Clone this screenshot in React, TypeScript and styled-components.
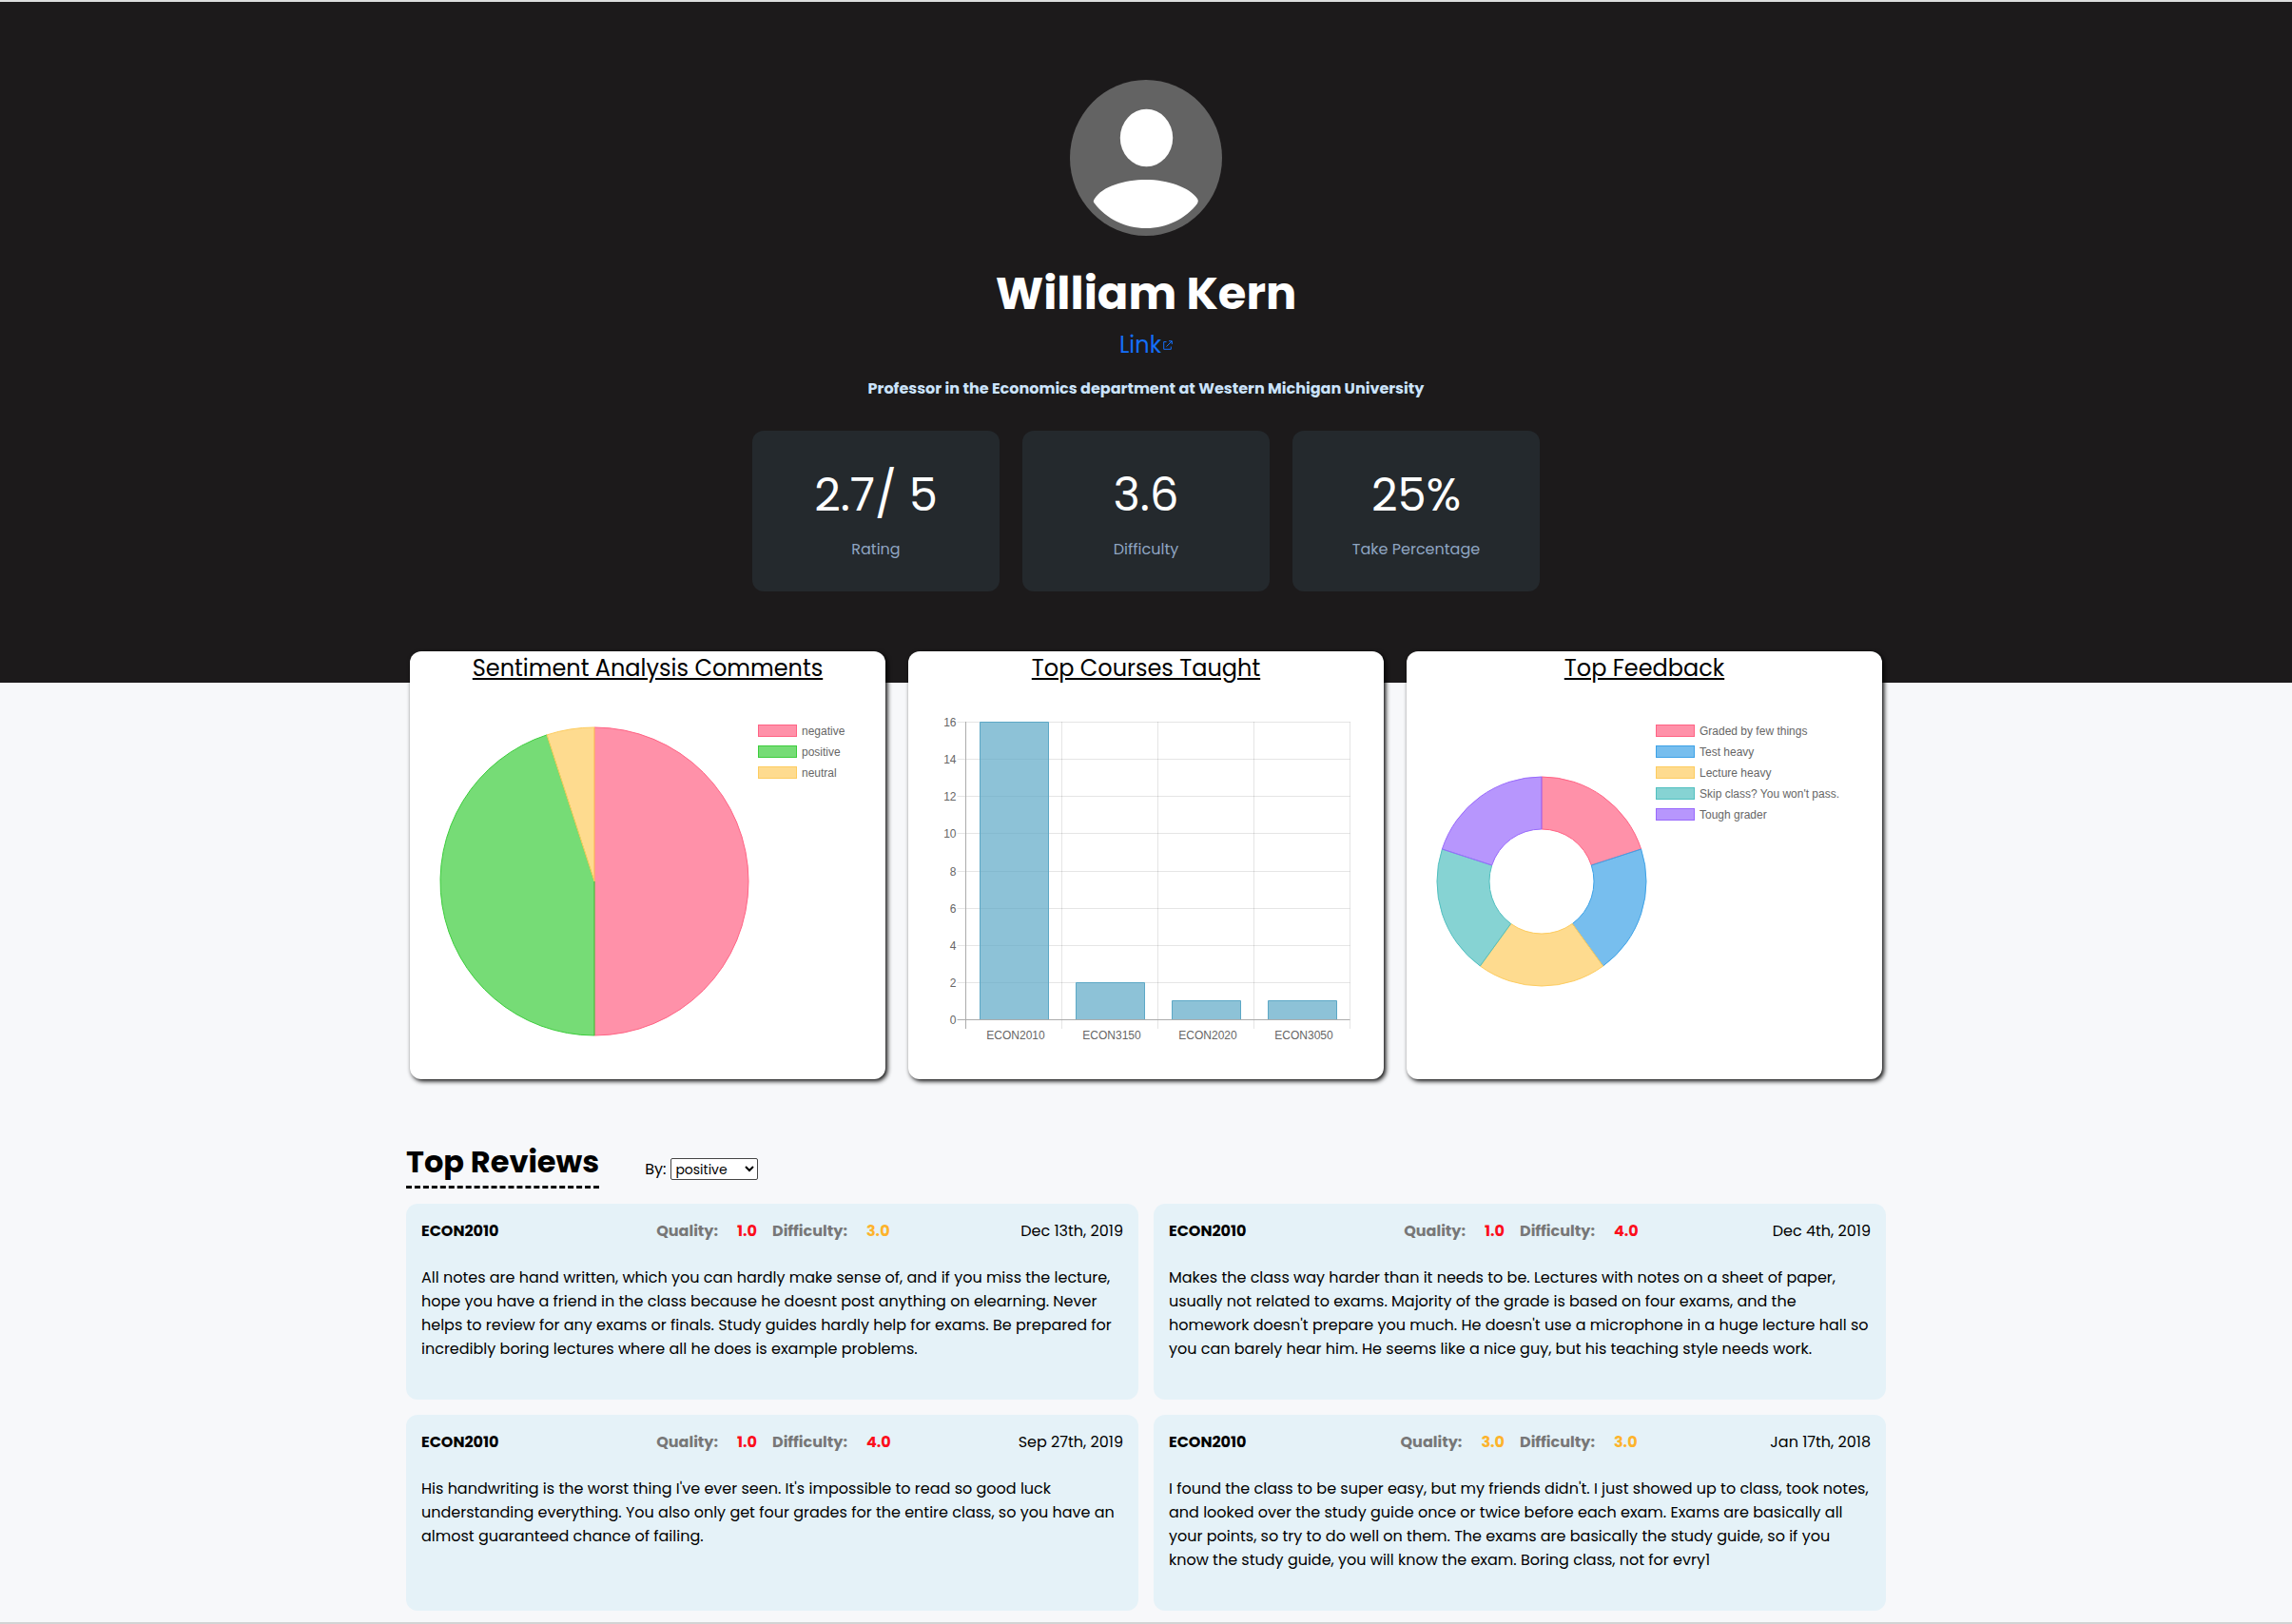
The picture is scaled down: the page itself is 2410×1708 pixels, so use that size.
import React from 'react';
import styled, { createGlobalStyle } from 'styled-components';

const Global = createGlobalStyle`
  *, *::before, *::after { box-sizing: border-box; }
  body {
    margin: 0;
    background: #f7f8fa;
    color: #000;
    font-family: Poppins, Inter, "Open Sans", sans-serif;
    font-size: 16px;
    line-height: 25px;
  }
  h1, h2, h3, p, ul, dl, dd { margin: 0; padding: 0; }
`;

const Page = styled.div`
  border-top: 2px solid #dcdede;
  border-bottom: 2px solid #d2d3d4;
`;

const Hero = styled.header`
  display: flex;
  flex-direction: column;
  align-items: center;
  height: 716px;
  padding: 82px 24px 0;
  background: #1c1a1b;
  color: #fff;
`;

const Name = styled.h1`
  margin-top: 24px;
  font-size: 48px;
  line-height: 73px;
  font-weight: 700;
`;

const ProfileLink = styled.a`
  display: flex;
  align-items: center;
  gap: 2px;
  font-size: 24px;
  line-height: 36px;
  color: #146ffb;
  text-decoration: none;
`;

const Summary = styled.p`
  margin-top: 16px;
  font-weight: 700;
  line-height: 24px;
  color: #cbe3fb;
`;

const Stats = styled.dl`
  display: flex;
  gap: 24px;
  margin-top: 32px;
`;

const StatCard = styled.div`
  display: flex;
  flex-direction: column-reverse;
  justify-content: center;
  gap: 8px;
  width: 260px;
  height: 169px;
  border-radius: 12px;
  background: #24292d;
  text-align: center;
`;

const StatLabel = styled.dt`
  color: #8fa5c2;
`;

const StatValue = styled.dd`
  font-size: 48px;
  line-height: 72px;
`;

const Content = styled.main`
  width: min(1556px, 100% - 48px);
  margin: -33px auto 0;
  padding-bottom: 12px;
`;

const Cards = styled.section`
  display: grid;
  grid-template-columns: repeat(3, 1fr);
  gap: 24px;
  padding: 0 4px;
`;

const Card = styled.article`
  height: 450px;
  border-radius: 12px;
  background: #fff;
  box-shadow: 2px 2px 5px #000;
`;

const CardTitle = styled.h2`
  font-size: 24px;
  line-height: 36px;
  font-weight: 400;
  text-align: center;
  text-decoration: underline;
`;

const ChartRow = styled.div`
  display: flex;
  align-items: center;
  height: 364px;
  margin-top: 24px;
  padding: 0 32px;
  font-family: "Liberation Sans", Arial, sans-serif;
  font-size: 12px;
  line-height: 12px;
  color: #666;
`;

const Drawing = styled.svg<{ $width: number }>`
  flex: 0 1 ${(p) => p.$width}px;
  min-width: 0;
  overflow: visible;
`;

const Legend = styled.ul`
  display: flex;
  flex-direction: column;
  flex-shrink: 0;
  align-self: flex-start;
  gap: 9px;
  padding: 17px 0 0 10px;
  list-style: none;
`;

const LegendItem = styled.li`
  display: flex;
  align-items: center;
  gap: 5px;
  height: 13px;
  white-space: nowrap;
`;

const Swatch = styled.span<{ $rgb: string }>`
  width: 41px;
  height: 13px;
  border: 1px solid rgb(${(p) => p.$rgb});
  background: rgba(${(p) => p.$rgb}, 0.7);
`;

const ReviewsHead = styled.div`
  display: flex;
  align-items: flex-end;
  gap: 48px;
  margin-top: 64px;
`;

const ReviewsTitle = styled.h2`
  padding-bottom: 3px;
  border-bottom: 3px dashed #000;
  font-size: 32px;
  line-height: 45px;
  font-weight: 700;
`;

const Filter = styled.label`
  display: flex;
  align-items: center;
  gap: 5px;
  padding-bottom: 8px;
`;

const Select = styled.select`
  width: 92px;
  height: 23px;
  padding: 0;
  border: 1px solid #444;
  border-radius: 2px;
  background: #fff;
  color: #000;
  font-family: inherit;
  font-size: 14px;
`;

const Reviews = styled.section`
  display: grid;
  grid-template-columns: 1fr 1fr;
  gap: 16px;
  margin-top: 16px;
`;

const Review = styled.article`
  min-height: 206px;
  padding: 17px 16px;
  border-radius: 12px;
  background: #e5f2f8;
`;

const ReviewHead = styled.header`
  display: grid;
  grid-template-columns: 1fr 1fr;
  line-height: 24px;
`;

const HeadHalf = styled.div`
  display: flex;
  justify-content: space-between;
`;

const Course = styled.h3`
  font-size: 16px;
  line-height: 24px;
  font-weight: 700;
`;

const Score = styled.span`
  display: flex;
  gap: 20px;
  margin-right: 16px;
  font-weight: 700;
  color: #777;
`;

const ScoreValue = styled.span<{ $color: string }>`
  color: ${(p) => p.$color};
`;

const Comment = styled.p`
  margin-top: 24px;
`;

const RED = '#fc0d1b';
const ORANGE = '#fdb32b';

type Slice = { label: string; value: number; rgb: string };

const sentiment: Slice[] = [
  { label: 'negative', value: 10, rgb: '255, 99, 132' },
  { label: 'positive', value: 9, rgb: '60, 205, 60' },
  { label: 'neutral', value: 1, rgb: '253, 204, 95' },
];

const feedback: Slice[] = [
  { label: 'Graded by few things', value: 1, rgb: '255, 99, 132' },
  { label: 'Test heavy', value: 1, rgb: '61, 162, 231' },
  { label: 'Lecture heavy', value: 1, rgb: '253, 204, 95' },
  { label: "Skip class? You won't pass.", value: 1, rgb: '82, 192, 192' },
  { label: 'Tough grader', value: 1, rgb: '153, 106, 252' },
];

const courses = [
  { label: 'ECON2010', value: 16 },
  { label: 'ECON3150', value: 2 },
  { label: 'ECON2020', value: 1 },
  { label: 'ECON3050', value: 1 },
];

const reviews = [
  {
    course: 'ECON2010',
    quality: '1.0',
    qualityColor: RED,
    difficulty: '3.0',
    difficultyColor: ORANGE,
    date: 'Dec 13th, 2019',
    text: 'All notes are hand written, which you can hardly make sense of, and if you miss the lecture, hope you have a friend in the class because he doesnt post anything on elearning. Never helps to review for any exams or finals. Study guides hardly help for exams. Be prepared for incredibly boring lectures where all he does is example problems.',
  },
  {
    course: 'ECON2010',
    quality: '1.0',
    qualityColor: RED,
    difficulty: '4.0',
    difficultyColor: RED,
    date: 'Dec 4th, 2019',
    text: "Makes the class way harder than it needs to be. Lectures with notes on a sheet of paper, usually not related to exams. Majority of the grade is based on four exams, and the homework doesn't prepare you much. He doesn't use a microphone in a huge lecture hall so you can barely hear him. He seems like a nice guy, but his teaching style needs work.",
  },
  {
    course: 'ECON2010',
    quality: '1.0',
    qualityColor: RED,
    difficulty: '4.0',
    difficultyColor: RED,
    date: 'Sep 27th, 2019',
    text: "His handwriting is the worst thing I've ever seen. It's impossible to read so good luck understanding everything. You also only get four grades for the entire class, so you have an almost guaranteed chance of failing.",
  },
  {
    course: 'ECON2010',
    quality: '3.0',
    qualityColor: ORANGE,
    difficulty: '3.0',
    difficultyColor: ORANGE,
    date: 'Jan 17th, 2018',
    text: "I found the class to be super easy, but my friends didn't. I just showed up to class, took notes, and looked over the study guide once or twice before each exam. Exams are basically all your points, so try to do well on them. The exams are basically the study guide, so if you know the study guide, you will know the exam. Boring class, not for evry1",
  },
];

function Avatar() {
  return (
    <svg width="160" height="164" viewBox="0 0 160 164" role="img" aria-label="Profile picture">
      <ellipse cx="80" cy="82" rx="80" ry="82" fill="#636363" />
      <ellipse cx="80.500" cy="61" rx="27.700" ry="30.200" fill="#fff" />
      <path
        d="M26 125C34 112 57 105 80 105s46 8 54 20c1 1.500 1 3 0 5-12 16-32 26-54 26s-42-10-54-26c-2-2-1-3.500 0-5Z"
        fill="#fff"
      />
    </svg>
  );
}

function ExternalIcon() {
  return (
    <svg width="10" height="10" viewBox="0 0 10 10" fill="none" stroke="currentColor" aria-hidden="true">
      <path d="M3.500 1.500H.7v7.800h7.600V6.500M6 .7h3.300V4M9 1 3.500 6.500" />
    </svg>
  );
}

function SliceChart({ data, radius, hole }: { data: Slice[]; radius: number; hole: number }) {
  const total = data.reduce((sum, s) => sum + s.value, 0);
  const point = (r: number, turn: number) => {
    const a = turn * Math.PI * 2;
    return `${(r * Math.sin(a)).toFixed(2)} ${(-r * Math.cos(a)).toFixed(2)}`;
  };
  let start = 0;
  return (
    <Drawing $width={radius * 2} viewBox={`${-radius} ${-radius} ${radius * 2} ${radius * 2}`}>
      {data.map((s) => {
        const from = start;
        const to = start + s.value / total;
        start = to;
        const large = to - from > 0.5 ? 1 : 0;
        const d =
          `M${point(radius, from)}A${radius} ${radius} 0 ${large} 1 ${point(radius, to)}` +
          `L${point(hole, to)}` +
          (hole ? `A${hole} ${hole} 0 ${large} 0 ${point(hole, from)}` : '') +
          'Z';
        return <path key={s.label} d={d} fill={`rgba(${s.rgb}, 0.7)`} stroke={`rgb(${s.rgb})`} />;
      })}
    </Drawing>
  );
}

function SliceLegend({ data }: { data: Slice[] }) {
  return (
    <Legend>
      {data.map((s) => (
        <LegendItem key={s.label}>
          <Swatch $rgb={s.rgb} />
          {s.label}
        </LegendItem>
      ))}
    </Legend>
  );
}

function BarChart() {
  const left = 28.5;
  const step = 101;
  const zero = 327.5;
  const y = (v: number) => Math.floor(zero - (v * 313) / 16) + 0.5;
  const right = left + step * courses.length;
  return (
    <Drawing $width={436} viewBox="0 0 436 364">
      <g stroke="#000" strokeOpacity="0.1">
        {[2, 4, 6, 8, 10, 12, 14, 16].map((v) => (
          <path key={v} d={`M${left - 9} ${y(v)}H${right}`} />
        ))}
        {[1, 2, 3, 4].map((i) => (
          <path key={i} d={`M${left + step * i} 14V337`} />
        ))}
      </g>
      <g fill="rgba(93, 168, 198, 0.7)" stroke="rgb(93, 168, 198)">
        {courses.map((c, i) => {
          const x = left + step * i + 15;
          return <path key={c.label} d={`M${x} ${zero - 0.5}V${y(c.value)}h72V${zero - 0.5}`} />;
        })}
      </g>
      <path d={`M${left} 14V337M${left - 9} ${zero}H${right}`} stroke="#acacac" />
      <g fill="#666" textAnchor="end">
        {[0, 2, 4, 6, 8, 10, 12, 14, 16].map((v) => (
          <text key={v} x={left - 10} y={y(v) + 4}>
            {v}
          </text>
        ))}
      </g>
      <g fill="#666" textAnchor="middle">
        {courses.map((c, i) => (
          <text key={c.label} x={left + step * (i + 0.5) + 2} y="348">
            {c.label}
          </text>
        ))}
      </g>
    </Drawing>
  );
}

export default function App() {
  return (
    <Page>
      <Global />
      <Hero>
        <Avatar />
        <Name>William Kern</Name>
        <ProfileLink href="#">
          Link
          <ExternalIcon />
        </ProfileLink>
        <Summary>Professor in the Economics department at Western Michigan University</Summary>
        <Stats>
          <StatCard>
            <StatLabel>Rating</StatLabel>
            <StatValue>2.7/ 5</StatValue>
          </StatCard>
          <StatCard>
            <StatLabel>Difficulty</StatLabel>
            <StatValue>3.6</StatValue>
          </StatCard>
          <StatCard>
            <StatLabel>Take Percentage</StatLabel>
            <StatValue>25%</StatValue>
          </StatCard>
        </Stats>
      </Hero>
      <Content>
        <Cards>
          <Card>
            <CardTitle>Sentiment Analysis Comments</CardTitle>
            <ChartRow>
              <SliceChart data={sentiment} radius={162} hole={0} />
              <SliceLegend data={sentiment} />
            </ChartRow>
          </Card>
          <Card>
            <CardTitle>Top Courses Taught</CardTitle>
            <ChartRow>
              <BarChart />
            </ChartRow>
          </Card>
          <Card>
            <CardTitle>Top Feedback</CardTitle>
            <ChartRow>
              <SliceChart data={feedback} radius={110} hole={55} />
              <SliceLegend data={feedback} />
            </ChartRow>
          </Card>
        </Cards>
        <ReviewsHead>
          <ReviewsTitle>Top Reviews</ReviewsTitle>
          <Filter>
            By:
            <Select defaultValue="positive">
              <option>positive</option>
              <option>negative</option>
              <option>neutral</option>
            </Select>
          </Filter>
        </ReviewsHead>
        <Reviews>
          {reviews.map((r) => (
            <Review key={r.date}>
              <ReviewHead>
                <HeadHalf>
                  <Course>{r.course}</Course>
                  <Score>
                    Quality: <ScoreValue $color={r.qualityColor}>{r.quality}</ScoreValue>
                  </Score>
                </HeadHalf>
                <HeadHalf>
                  <Score>
                    Difficulty: <ScoreValue $color={r.difficultyColor}>{r.difficulty}</ScoreValue>
                  </Score>
                  <time>{r.date}</time>
                </HeadHalf>
              </ReviewHead>
              <Comment>{r.text}</Comment>
            </Review>
          ))}
        </Reviews>
      </Content>
    </Page>
  );
}
